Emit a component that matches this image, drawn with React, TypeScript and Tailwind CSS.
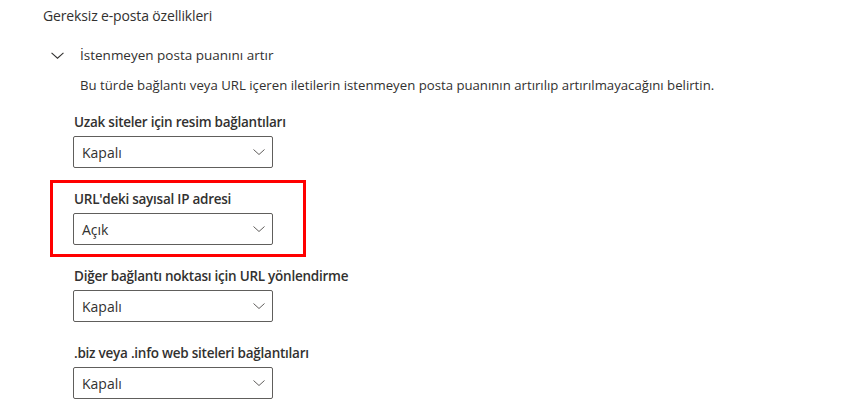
import React from 'react';

const options = [
  { label: 'Uzak siteler için resim bağlantıları', value: 'Kapalı' },
  { label: "URL'deki sayısal IP adresi", value: 'Açık', highlighted: true },
  { label: 'Diğer bağlantı noktası için URL yönlendirme', value: 'Kapalı' },
  { label: '.biz veya .info web siteleri bağlantıları', value: 'Kapalı' },
];

const Chevron = ({ className }: { className?: string }) => (
  <svg viewBox="0 0 12 6" className={className} fill="none">
    <path d="M0.5 0.5 L6 5.5 L11.5 0.5" stroke="currentColor" strokeWidth="1" />
  </svg>
);

const Dropdown = ({ value }: { value: string }) => (
  <div className="flex h-8 w-[200px] items-center justify-between rounded-[2px] border border-[#605e5c] bg-white pl-2 pr-[7px]">
    <span className="text-[14px] text-[#323130]">{value}</span>
    <Chevron className="h-[6px] w-3 text-[#605e5c]" />
  </div>
);

const Field = ({ label, value }: { label: string; value: string }) => (
  <div>
    <div className="ml-px h-5 text-[13.5px] font-semibold leading-5 tracking-[-0.25px] text-[#323130]">{label}</div>
    <div className="mt-1">
      <Dropdown value={value} />
    </div>
  </div>
);

export default function App() {
  return (
    <div
      className="h-[410px] w-[856px] overflow-hidden bg-white text-[#323130]"
      style={{ fontFamily: '"Open Sans", "Noto Sans", sans-serif' }}
    >
      <div className="pl-[43px] pt-[6px] text-[14px] leading-5 tracking-[-0.15px]">Gereksiz e-posta özellikleri</div>

      <div className="mt-[19px] flex items-center pl-[51px]">
        <Chevron className="h-[7px] w-[13px] text-[#323130]" />
        <span className="ml-4 text-[13.5px] font-medium leading-5">İstenmeyen posta puanını artır</span>
      </div>

      <div className="mt-[10px] pl-20 text-[13.2px] leading-5">
        Bu türde bağlantı veya URL içeren iletilerin istenmeyen posta puanının artırılıp artırılmayacağını belirtin.
      </div>

      <div className="mt-[17px] pl-[73px]">
        <Field label={options[0].label} value={options[0].value} />
      </div>

      <div className="ml-[50px] mt-3 w-[256px] border-[3px] border-[#ff0000] pb-[9px] pl-5 pt-[6px]">
        <Field label={options[1].label} value={options[1].value} />
      </div>

      <div className="mt-[9px] pl-[73px]">
        <Field label={options[2].label} value={options[2].value} />
      </div>

      <div className="mt-[21px] pl-[73px]">
        <Field label={options[3].label} value={options[3].value} />
      </div>
    </div>
  );
}
